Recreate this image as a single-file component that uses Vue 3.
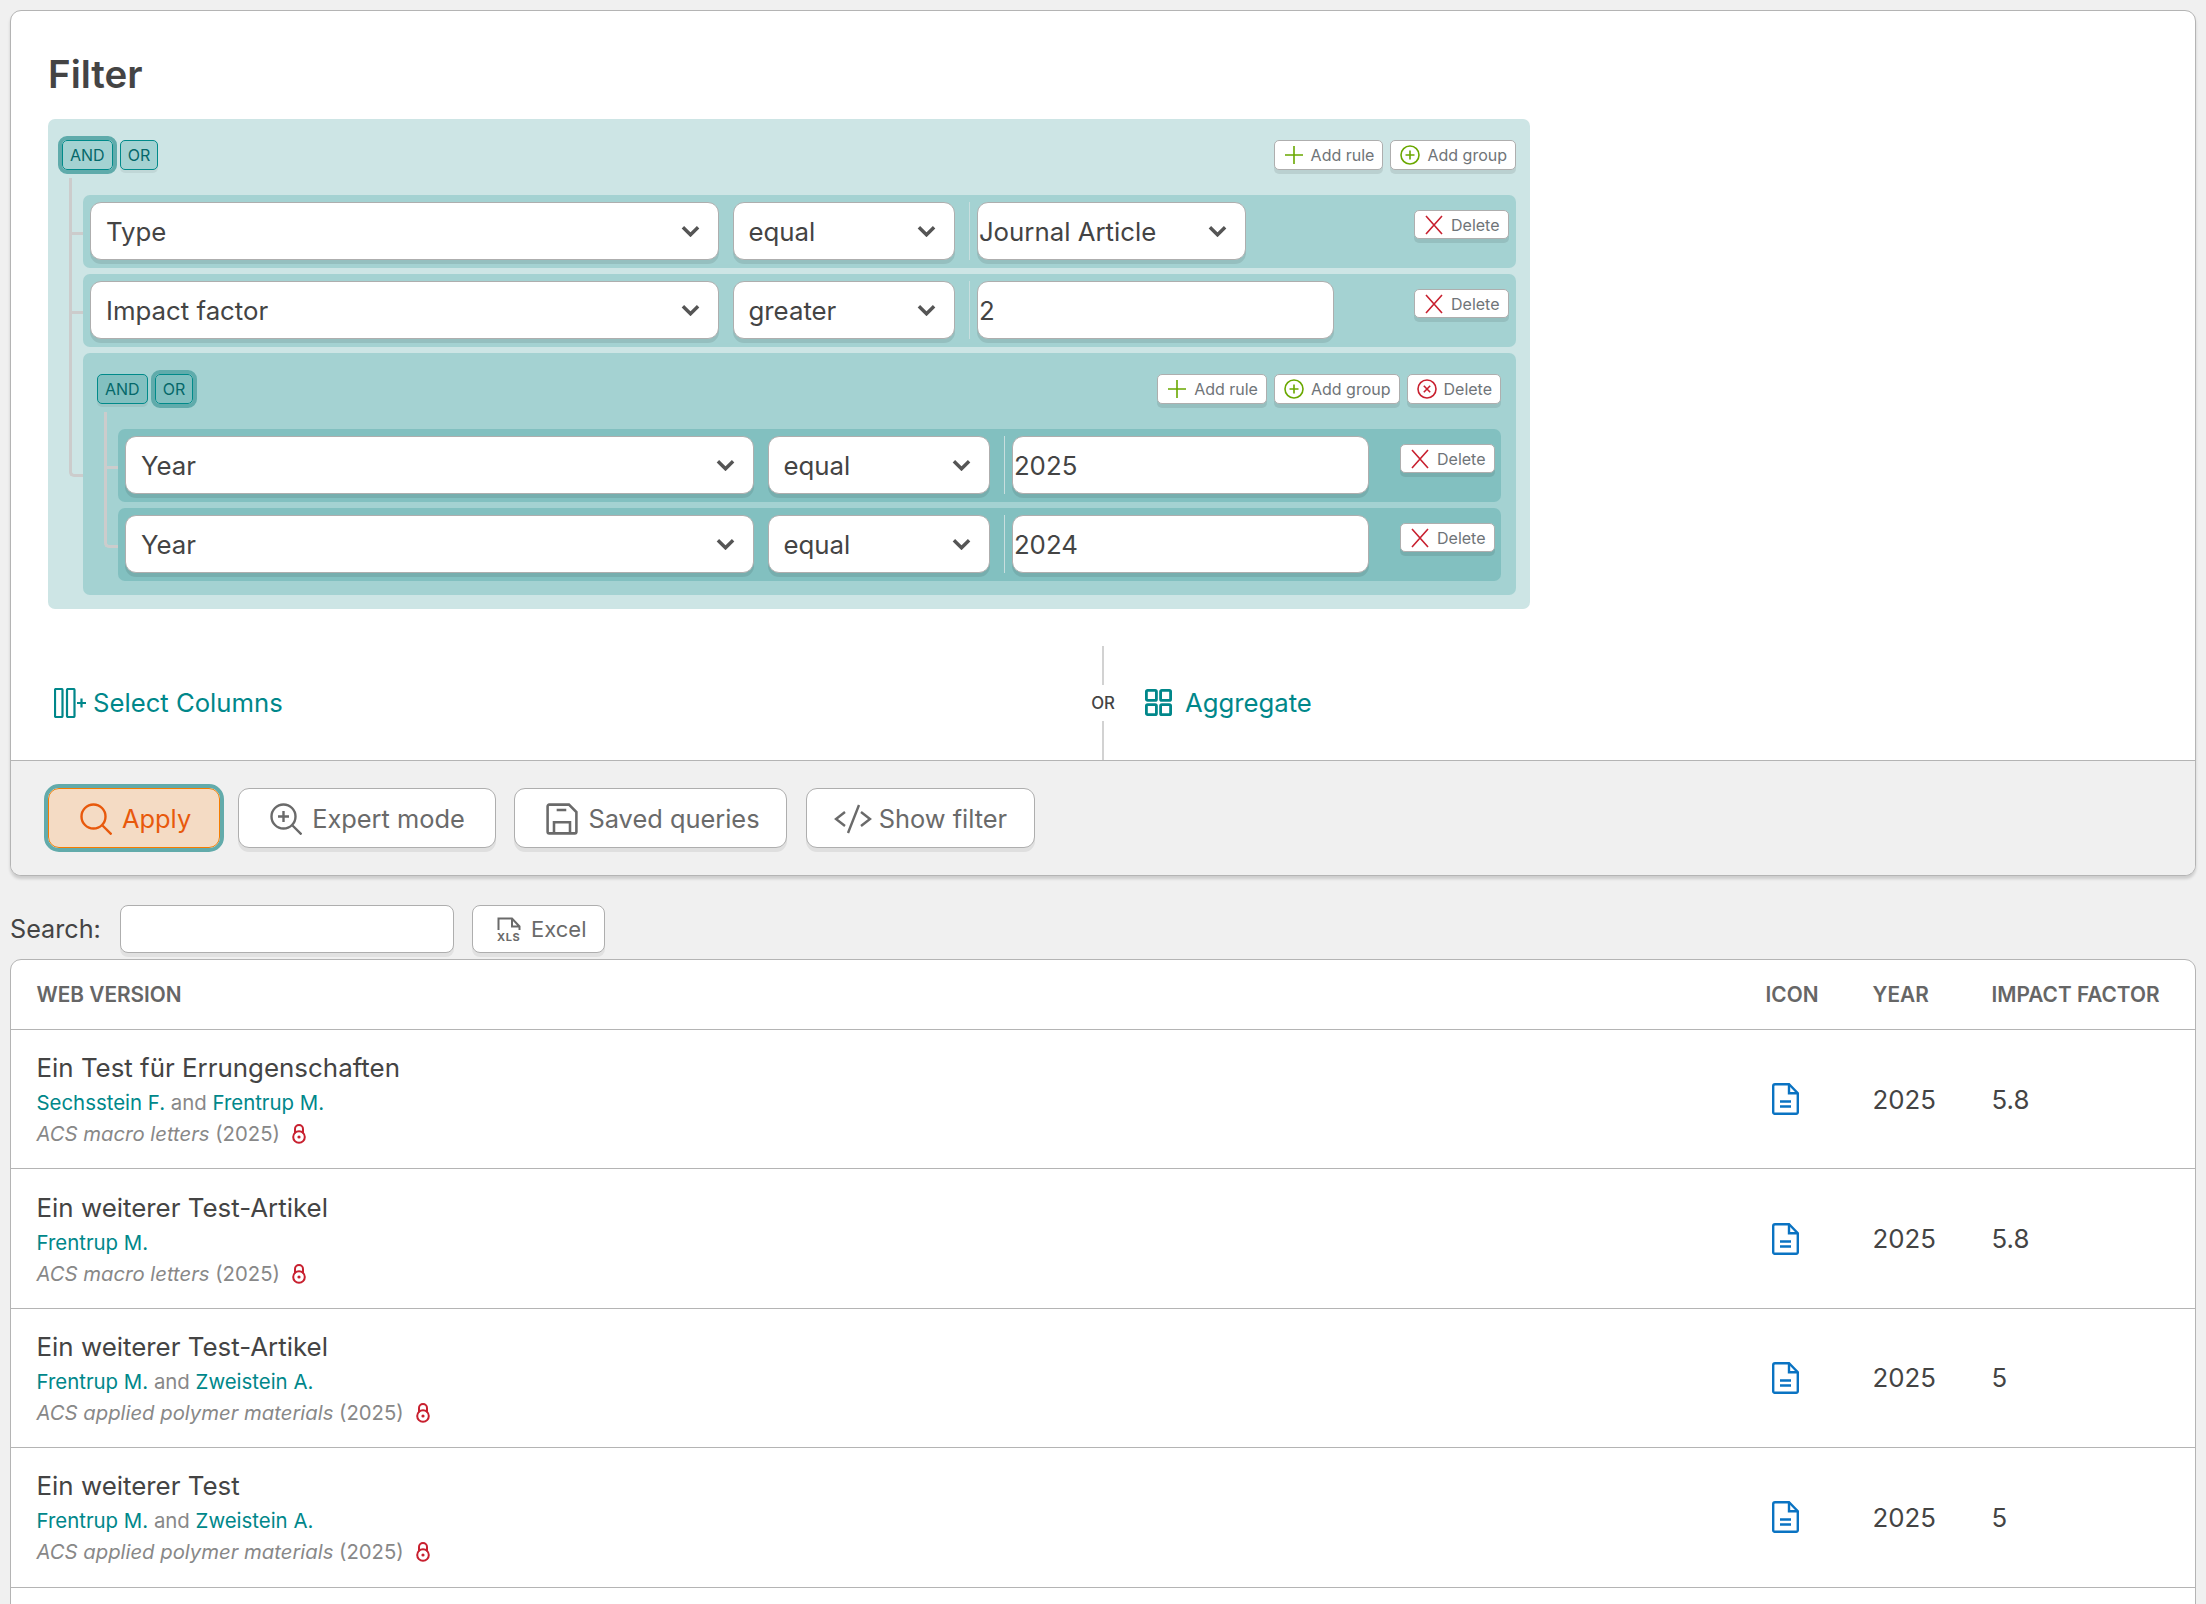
<script setup>
const rows = [
  { title: 'Ein Test für Errungenschaften', authors: ['Sechsstein F.', 'Frentrup M.'], journal: 'ACS macro letters', impact: '5.8' },
  { title: 'Ein weiterer Test-Artikel', authors: ['Frentrup M.'], journal: 'ACS macro letters', impact: '5.8' },
  { title: 'Ein weiterer Test-Artikel', authors: ['Frentrup M.', 'Zweistein A.'], journal: 'ACS applied polymer materials', impact: '5' },
  { title: 'Ein weiterer Test', authors: ['Frentrup M.', 'Zweistein A.'], journal: 'ACS applied polymer materials', impact: '5' }
]
</script>

<template>
  <div class="page">
    <section class="card">
      <div class="card-body">
        <h2>Filter</h2>
        <div class="group">
          <div class="group-bar">
            <div class="conds">
              <button class="cond active">AND</button>
              <button class="cond">OR</button>
            </div>
            <div class="actions">
              <button class="mini"><svg class="ic" viewBox="0 0 20 20"><path class="green" d="M10 1v18M1 10h18" /></svg>Add rule</button>
              <button class="mini"><svg class="ic" viewBox="0 0 20 20"><circle class="green" cx="10" cy="10" r="9" /><path class="green" d="M10 5.5v9M5.5 10h9" /></svg>Add group</button>
            </div>
          </div>
          <div class="rules">
            <div class="rule">
              <div class="sel field-wide">Type<svg class="chev" viewBox="0 0 20 12"><path d="M2 2l8 8 8-8" /></svg></div>
              <div class="sel field-op">equal<svg class="chev" viewBox="0 0 20 12"><path d="M2 2l8 8 8-8" /></svg></div>
              <i class="sep"></i>
              <div class="sel field-val">Journal Article<svg class="chev" viewBox="0 0 20 12"><path d="M2 2l8 8 8-8" /></svg></div>
              <button class="mini del"><svg class="ic" viewBox="0 0 20 20"><path class="red" d="M2 1l16 18M18 1L2 19" /></svg>Delete</button>
            </div>
            <div class="rule">
              <div class="sel field-wide">Impact factor<svg class="chev" viewBox="0 0 20 12"><path d="M2 2l8 8 8-8" /></svg></div>
              <div class="sel field-op">greater<svg class="chev" viewBox="0 0 20 12"><path d="M2 2l8 8 8-8" /></svg></div>
              <i class="sep"></i>
              <input class="val" value="2" />
              <button class="mini del"><svg class="ic" viewBox="0 0 20 20"><path class="red" d="M2 1l16 18M18 1L2 19" /></svg>Delete</button>
            </div>
            <div class="group sub">
              <div class="group-bar">
                <div class="conds">
                  <button class="cond">AND</button>
                  <button class="cond active">OR</button>
                </div>
                <div class="actions">
                  <button class="mini"><svg class="ic" viewBox="0 0 20 20"><path class="green" d="M10 1v18M1 10h18" /></svg>Add rule</button>
                  <button class="mini"><svg class="ic" viewBox="0 0 20 20"><circle class="green" cx="10" cy="10" r="9" /><path class="green" d="M10 5.5v9M5.5 10h9" /></svg>Add group</button>
                  <button class="mini"><svg class="ic" viewBox="0 0 20 20"><circle class="red" cx="10" cy="10" r="9" /><path class="red" d="M6.8 6.8l6.4 6.4M13.2 6.8l-6.4 6.4" /></svg>Delete</button>
                </div>
              </div>
              <div class="rules">
                <div v-for="y in ['2025', '2024']" :key="y" class="rule">
                  <div class="sel field-wide">Year<svg class="chev" viewBox="0 0 20 12"><path d="M2 2l8 8 8-8" /></svg></div>
                  <div class="sel field-op">equal<svg class="chev" viewBox="0 0 20 12"><path d="M2 2l8 8 8-8" /></svg></div>
                  <i class="sep"></i>
                  <input class="val" :value="y" />
                  <button class="mini del"><svg class="ic" viewBox="0 0 20 20"><path class="red" d="M2 1l16 18M18 1L2 19" /></svg>Delete</button>
                </div>
              </div>
            </div>
          </div>
        </div>

        <div class="extras">
          <a class="extra cols">
            <svg class="columns" viewBox="0 0 32 30"><rect x="1" y="1" width="7.5" height="28" rx="1" /><rect x="13" y="1" width="7.5" height="28" rx="1" /><path d="M23 15h9M27.5 10.5v9" /></svg>
            Select Columns
          </a>
          <div class="or-split"><span>OR</span></div>
          <a class="extra aggregate">
            <svg class="agg" viewBox="0 0 27 27"><rect x="1.4" y="1.4" width="10" height="10" rx="1.2" /><rect x="15.6" y="1.4" width="10" height="10" rx="1.2" /><rect x="1.4" y="15.6" width="10" height="10" rx="1.2" /><rect x="15.6" y="15.6" width="10" height="10" rx="1.2" /></svg>
            Aggregate
          </a>
        </div>
      </div>

      <div class="card-foot">
        <button class="big apply">
          <svg class="big-ic" viewBox="0 0 32 32"><circle cx="13.5" cy="13.5" r="12" /><path d="M22.5 22.5l9 9" /></svg>
          Apply
        </button>
        <button class="big expert">
          <svg class="big-ic" viewBox="0 0 32 32"><circle cx="13.5" cy="13.5" r="12" /><path d="M22.5 22.5l9 9M13.5 8v11M8 13.5h11" /></svg>
          Expert mode
        </button>
        <button class="big saved">
          <svg class="big-ic" viewBox="0 0 30 30"><path d="M3 1.5h18.5l7 7V27a1.5 1.5 0 0 1-1.5 1.5H3A1.5 1.5 0 0 1 1.5 27V3A1.5 1.5 0 0 1 3 1.5z" /><path d="M10 6.5h9M7.5 28.5V18h15v10.5" /></svg>
          Saved queries
        </button>
        <button class="big show">
          <svg class="code" viewBox="0 0 38 30"><path d="M11 8L2 15l9 7M27 8l9 7-9 7M25 1l-11 28" /></svg>
          Show filter
        </button>
      </div>
    </section>

    <div class="search-row">
      <label>Search:</label>
      <input class="search" />
      <button class="excel">
        <svg class="xls" viewBox="0 0 24 24"><path d="M1.5 13V1.5h13.5l7.5 8V13M15 2v7.5h7" /><text x="0" y="23.5" class="xls-txt">XLS</text></svg>
        Excel
      </button>
    </div>

    <section class="results">
      <div class="line head">
        <div class="col-main">WEB VERSION</div>
        <div class="col-icon">ICON</div>
        <div class="col-year">YEAR</div>
        <div class="col-if">IMPACT FACTOR</div>
      </div>
      <div v-for="(r, i) in rows" :key="i" class="line row">
        <div class="col-main text-cell">
          <div class="title">{{ r.title }}</div>
          <div class="authors">
            <template v-for="(a, j) in r.authors" :key="a">
              <span v-if="j > 0" class="and"> and </span><a>{{ a }}</a>
            </template>
          </div>
          <div class="meta">
            <span><em>{{ r.journal }}</em> (2025)</span>
            <svg class="lock" viewBox="0 0 14 20"><path d="M3 9.5V5a4 4 0 0 1 8 0v4.5" /><circle cx="7" cy="13" r="5.8" /><circle class="dot" cx="7" cy="13" r="1.6" /></svg>
          </div>
        </div>
        <div class="col-icon">
          <svg class="doc" viewBox="0 0 27 32"><path d="M3 1.2h14l8.8 9v19a1.6 1.6 0 0 1-1.6 1.6H3A1.6 1.6 0 0 1 1.2 29.2V3A1.8 1.8 0 0 1 3 1.2z" /><path d="M17 1.5v8.7h8.5M8 18.5h11M8 23.5h11" /></svg>
        </div>
        <div class="col-year">2025</div>
        <div class="col-if">{{ r.impact }}</div>
      </div>
    </section>
  </div>
</template>

<style scoped>
.page {
  height: 1604px;
  overflow: hidden;
  box-sizing: border-box;
  padding: 10px 10px 0;
  background: #f0f0f0;
  color: #444;
  font-family: Inter, "Liberation Sans", sans-serif;
  font-size: 25.8px;
}
button {
  font-family: inherit;
  cursor: pointer;
}
.card {
  background: #fff;
  border: 1.4px solid #b4b4b4;
  border-radius: 11px;
  box-shadow: 0 3px 3px rgba(0, 0, 0, 0.15);
  overflow: hidden;
}
.card-body {
  padding: 0 37px;
}
h2 {
  margin: 0;
  padding: 42px 0 24px;
  font-size: 38.5px;
  line-height: 42px;
  font-weight: 600;
  color: #444;
}
.group {
  width: 1482px;
  box-sizing: border-box;
  padding: 21px 14px 14px 14px;
  background: #cde5e5;
  border-radius: 7px;
}
.group.sub {
  width: auto;
  padding-right: 15px;
  background: #a4d2d2;
}
.group-bar {
  display: flex;
  justify-content: space-between;
  height: 30px;
}
.conds {
  display: flex;
  gap: 7px;
}
.cond {
  height: 30px;
  padding: 0 7px;
  font-size: 16px;
  line-height: 1;
  color: #05686a;
  background: #a4d2d2;
  border: 1.4px solid #008a8a;
  border-radius: 5px;
  box-shadow: 0 3px 0 rgba(0, 0, 0, 0.06);
}
.sub .cond {
  background: #82c0c0;
}
.cond.active {
  outline: 4px solid #5fabab;
  box-shadow: none;
}
.actions {
  display: flex;
  gap: 7px;
}
.mini {
  display: flex;
  align-items: center;
  gap: 7px;
  height: 30px;
  padding: 0 8px 0 9px;
  font-size: 16px;
  color: #6f7478;
  background: #fff;
  border: 1.4px solid #aeaeae;
  border-radius: 5px;
  box-shadow: 0 4px 0 rgba(0, 0, 0, 0.09);
  white-space: nowrap;
}
.ic {
  width: 20px;
  height: 20px;
  flex: none;
}
.green, .red {
  fill: none;
  stroke-width: 1.6;
}
.green { stroke: #6aa800; }
.red { stroke: #c8202f; }
.rules {
  display: flex;
  flex-direction: column;
  gap: 6px;
  margin-top: 25px;
  padding-left: 21px;
}
.rules > * {
  position: relative;
}
.rules > *::before,
.rules > *::after {
  content: '';
  position: absolute;
  left: -14px;
  width: 14px;
  border-color: #ccc;
  border-style: solid;
  box-sizing: border-box;
}
.rules > *::before {
  top: -3px;
  height: calc(50% + 6px);
  border-width: 0 0 3px 3px;
}
.rules > *::after {
  top: 50%;
  height: calc(50% + 6px);
  border-width: 0 0 0 3px;
}
.rules > *:first-child::before {
  top: -17px;
  height: calc(50% + 20px);
}
.rules > *:last-child::before {
  border-radius: 0 0 0 5px;
}
.rules > *:last-child::after {
  display: none;
}
.rule {
  display: flex;
  align-items: flex-start;
  height: 73px;
  box-sizing: border-box;
  padding: 7px 7.5px 7px 7px;
  background: #a4d2d2;
  border-radius: 7px;
}
.sub .rule {
  background: #82c0c0;
  padding-right: 6.5px;
}
.sel, .val {
  box-sizing: border-box;
  height: 58px;
  background: #fff;
  border: 1.4px solid #aeaeae;
  border-radius: 11px;
  box-shadow: 0 4px 0 rgba(0, 0, 0, 0.09);
  font-family: inherit;
  font-size: 25.8px;
  color: #444;
}
.sel {
  display: flex;
  align-items: center;
  justify-content: space-between;
  padding: 0 18px 0 15px;
  white-space: nowrap;
}
.chev {
  width: 19px;
  height: 12px;
  flex: none;
}
.chev path {
  fill: none;
  stroke: #555;
  stroke-width: 3.6;
}
.field-wide {
  width: 628.5px;
  margin-right: 14px;
}
.field-op {
  width: 222px;
}
.sep {
  width: 1.4px;
  height: 58px;
  margin: 0 7px 0 14px;
  background: #c8dede;
}
.field-val {
  width: 269px;
  padding: 0 18px 0 1px;
}
.val {
  width: 357px;
  padding: 0 1px;
  outline: none;
}
.del {
  margin-left: auto;
  margin-top: 8px;
  height: 29px;
}
.extras {
  display: flex;
  align-items: stretch;
  height: 114px;
  margin-top: 37px;
  padding-left: 6px;
}
.extra {
  display: flex;
  align-items: center;
  gap: 7px;
  padding-bottom: 1px;
  color: #00878a;
  font-size: 25.7px;
  white-space: nowrap;
}
.cols {
  width: 1037px;
  flex: none;
}
.aggregate {
  gap: 13px;
  margin-left: 30px;
}
.columns {
  width: 32px;
  height: 30px;
}
.columns rect, .columns path, .agg rect {
  fill: none;
  stroke: #00878a;
  stroke-width: 2.2;
}
.agg rect {
  stroke-width: 2.8;
}
.or-split {
  display: flex;
  flex-direction: column;
  align-items: center;
  width: 24px;
  flex: none;
}
.or-split::before,
.or-split::after {
  content: '';
  flex: 1;
  width: 1.4px;
  background: #d2d2d2;
}
.or-split span {
  height: 36px;
  line-height: 36px;
  font-size: 16.8px;
  font-weight: 500;
  color: #444;
}
.agg {
  width: 27px;
  height: 27px;
}
.card-foot {
  display: flex;
  gap: 18.6px;
  height: 115px;
  box-sizing: border-box;
  padding-top: 27px;
  padding-left: 37px;
  background: #f0f0f0;
  border-top: 1.4px solid #b4b4b4;
}
.big {
  display: flex;
  align-items: center;
  gap: 10px;
  height: 60px;
  padding: 1px 29px 0 31px;
  font-size: 25.4px;
  color: #6a6a6a;
  background: #fff;
  border: 1.4px solid #aeaeae;
  border-radius: 11px;
  box-shadow: 0 4px 0 rgba(0, 0, 0, 0.07);
}
.big-ic {
  width: 32px;
  height: 32px;
}
.big-ic circle, .big-ic path, .code path {
  fill: none;
  stroke: #6a6a6a;
  stroke-width: 2.4;
}
.code {
  width: 38px;
  height: 30px;
}
.expert {
  padding-right: 30px;
}
.saved {
  padding-right: 26.5px;
}
.show {
  gap: 7px;
  padding: 1px 27px 0 27px;
}
.apply {
  padding-right: 27.4px;
  color: #e8590c;
  background: #f4dbc4;
  border-color: #f57c00;
  outline: 4px solid #62abab;
  box-shadow: none;
}
.apply circle, .apply path {
  stroke: #e8590c;
}
.search-row {
  display: flex;
  align-items: center;
  height: 48px;
  margin-top: 29px;
  font-size: 25.2px;
  color: #444;
}
.search-row label {
  width: 110px;
}
.search {
  box-sizing: border-box;
  width: 334px;
  height: 48px;
  margin-right: 18px;
  border: 1.4px solid #aeaeae;
  border-radius: 8px;
  background: #fff;
  box-shadow: 0 4px 0 rgba(0, 0, 0, 0.06);
}
.excel {
  display: flex;
  align-items: center;
  gap: 10px;
  height: 48px;
  padding: 0 18px 0 24px;
  font-size: 22px;
  color: #6a6a6a;
  background: #fff;
  border: 1.4px solid #aeaeae;
  border-radius: 8px;
  box-shadow: 0 4px 0 rgba(0, 0, 0, 0.06);
}
.xls {
  width: 24px;
  height: 24px;
}
.xls path {
  fill: none;
  stroke: #6a6a6a;
  stroke-width: 2;
}
.xls-txt {
  font-size: 11px;
  font-weight: 700;
  letter-spacing: 0.6px;
  fill: #6a6a6a;
}
.results {
  min-height: 760px;
  margin-top: 6px;
  background: #fff;
  border: 1.4px solid #b4b4b4;
  border-radius: 11px;
}
.line {
  display: flex;
  box-sizing: border-box;
  padding-left: 25.5px;
  border-bottom: 1.4px solid #b4b4b4;
}
.head {
  height: 70px;
  align-items: center;
  font-size: 20.8px;
  font-weight: 600;
  color: #666;
}
.row {
  height: 139.4px;
  align-items: center;
}
.col-main {
  flex: 1;
}
.text-cell {
  padding-top: 2px;
}
.col-icon {
  width: 107px;
}
.col-year {
  width: 119px;
}
.col-if {
  width: 203.4px;
}
.title {
  font-size: 25.9px;
  line-height: 36px;
}
.authors {
  font-size: 20.4px;
  line-height: 30px;
  margin-top: 2px;
}
.authors a {
  color: #00878a;
}
.and {
  color: #888;
}
.meta {
  display: flex;
  align-items: center;
  font-size: 20.3px;
  line-height: 32px;
  color: #888;
}
.lock {
  width: 14px;
  height: 20px;
  margin-left: 12px;
}
.lock path, .lock circle {
  fill: none;
  stroke: #c8202f;
  stroke-width: 2;
}
.lock .dot {
  fill: #c8202f;
  stroke: none;
}
.doc {
  width: 27px;
  height: 32px;
  margin-left: 6.4px;
  display: block;
}
.doc path {
  fill: none;
  stroke: #0a73c2;
  stroke-width: 2.4;
}
</style>
